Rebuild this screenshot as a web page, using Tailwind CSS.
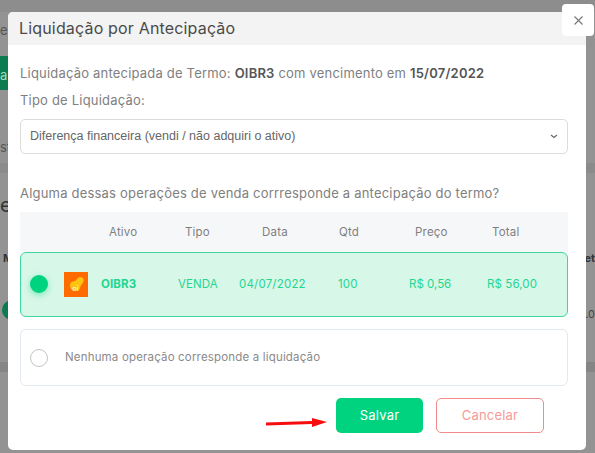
<!DOCTYPE html>
<html lang="pt-BR">
<head>
    <meta charset="UTF-8">
    <title>Liquidação por Antecipação</title>
    <script src="https://cdn.jsdelivr.net/npm/@tailwindcss/browser@4"></script>
</head>
<body class="font-['Inter',sans-serif]">
    <div class="relative w-[595px] h-[453px] overflow-hidden bg-[#939393]">
        <!-- page behind the backdrop -->
        <div class="absolute left-0 top-0 w-full h-[12px] bg-[#8d8d8d]"></div>
        <div class="absolute left-0 top-[56px] w-[8px] h-[34px] bg-[#0c7c50]"></div>
        <div class="absolute left-0 top-[163px] w-[8px] h-[10px] bg-[#8b8b8b]"></div>
        <div class="absolute right-0 top-[163px] w-[9px] h-[10px] bg-[#8b8b8b]"></div>
        <div class="absolute left-0 top-[362px] w-[8px] h-[10px] bg-[#858585]"></div>
        <div class="absolute right-0 top-[362px] w-[9px] h-[10px] bg-[#858585]"></div>
        <div class="absolute left-[2px] top-[300px] w-[20px] h-[20px] rounded-full bg-[#0c7c50]"></div>
        <span class="absolute left-0 top-[21px] text-[13px] text-[#555]">er</span>
        <span class="absolute left-0 top-[66px] text-[13px] text-[#a5d8c0]">a</span>
        <span class="absolute left-0 top-[138px] text-[13px] text-[#555]">st</span>
        <span class="absolute left-0 top-[190px] text-[20px] text-[#333]">e</span>
        <span class="absolute left-[3px] top-[250px] text-[11px] font-bold text-[#333]">M</span>
        <span class="absolute right-0 top-[250px] text-[11px] font-bold text-[#333]">et</span>
        <span class="absolute right-0 top-[306px] text-[11px] text-[#444]">0.0</span>

        <!-- modal -->
        <div class="absolute left-[8px] top-[12px] w-[578px] h-[438px] rounded-[5px] bg-white flex flex-col">
            <div class="h-[33px] shrink-0 rounded-t-[5px] bg-[#f3f3f3] pl-[11px] pb-[1px] flex items-center text-[16px] tracking-[0.17px] text-[#4a4a4a]">Liquidação por Antecipação</div>
            <div class="flex flex-col pl-[12px] pr-[18px] text-[13px] tracking-[0.2px] text-[#808080]">
                <p class="mt-[19px] h-[18px] leading-[18px]">Liquidação antecipada de Termo: <b class="font-semibold text-[#555]">OIBR3</b> com vencimento em <b class="font-semibold text-[#555]">15/07/2022</b></p>
                <p class="mt-[9px] h-[18px] leading-[18px]">Tipo de Liquidação:</p>
                <div class="mt-[10px] h-[35px] rounded-[5px] border border-[#dcdcdc] pl-[9px] pr-[9px] flex items-center justify-between font-['Liberation_Sans',sans-serif] text-[12.5px] tracking-normal text-[#666]">
                    <span>Diferença financeira (vendi / não adquiri o ativo)</span>
                    <svg width="8" height="5" viewBox="0 0 8 5" fill="none" stroke="#666" stroke-width="1.1"><path d="M1 1l3 2.500 3-2.500"/></svg>
                </div>
                <p class="mt-[30px] h-[18px] leading-[18px]">Alguma dessas operações de venda corrresponde a antecipação do termo?</p>

                <div class="mt-[10px] h-[40px] pt-[2px] bg-[#f6f7f9] grid grid-cols-[81px_77px_61px_99px_71px_78px_1fr] items-center text-[11.5px] text-[#808080]">
                    <span></span>
                    <span class="pl-[8px]">Ativo</span>
                    <span class="pl-[7px]">Tipo</span>
                    <span class="pl-[23px]">Data</span>
                    <span class="pl-[1px]">Qtd</span>
                    <span class="pl-[6px]">Preço</span>
                    <span class="pl-[5px]">Total</span>
                </div>

                <div class="h-[65px] rounded-[6px] border border-[#3ed69c] bg-[#d7f7e9] grid grid-cols-[80px_77px_61px_99px_71px_78px_1fr] items-center text-[11.5px] tracking-[0.1px] text-[#1fd690]">
                    <div class="flex items-center">
                        <span class="ml-[9px] mt-[-2px] w-[18px] h-[18px] rounded-full bg-[#00d37f] shadow-[0_2px_6px_rgba(0,211,127,0.45)]"></span>
                        <span class="ml-[16px] w-[24px] h-[25px] bg-[#ff6b00] relative flex items-center justify-center">
                            <svg class="absolute left-[5px] top-[5px]" width="15" height="15" viewBox="0 0 15 15"><path d="M1 8c0-2 1-3 3-3.500 2-.5 3-1 4-2.500 1-1.500 3-2 5-1.500 2 1 2 3 1 5-1 2-2.500 3-3 5.500-.5 2-2 3-4.500 3-3 0-5.500-2-5.500-5.500z" fill="#fdc311"/></svg>
                            <span class="relative mt-[7px] ml-[-1px] text-[7px] leading-none font-semibold text-[#fff3c4]">oi</span>
                        </span>
                    </div>
                    <span class="font-bold">OIBR3</span>
                    <span>VENDA</span>
                    <span class="tracking-[0.2px]">04/07/2022</span>
                    <span>100</span>
                    <span class="tracking-normal">R$ 0,56</span>
                    <span>R$ 56,00</span>
                </div>

                <div class="mt-[12px] h-[57px] rounded-[6px] border border-[#e2e8f0] flex items-center text-[11.5px] tracking-[0.17px] text-[#8a8a8a]">
                    <span class="ml-[9px] w-[18px] h-[18px] rounded-full border border-[#c4c4c4]"></span>
                    <span class="ml-[17px]">Nenhuma operação corresponde a liquidação</span>
                </div>

                <div class="mt-[12px] flex items-start">
                    <svg class="ml-[246px] mt-[18px]" width="62" height="12" viewBox="0 0 62 12"><path d="M0 6.500L46 5V2l15 4-15 5V8L0 9.500z" fill="#f70d0d"/></svg>
                    <button class="ml-[8px] w-[87px] h-[35px] rounded-[5px] bg-[#00d37f] text-[13px] text-white">Salvar</button>
                    <button class="ml-[13px] w-[108px] h-[35px] rounded-[5px] border border-[#f28b8b] text-[13px] text-[#f59a9a]">Cancelar</button>
                </div>
            </div>
        </div>

        <!-- close button -->
        <button class="absolute left-[562px] top-[4px] w-[32px] h-[32px] rounded-[4px] bg-white flex items-center justify-center">
            <svg width="11" height="11" viewBox="0 0 11 11" fill="none" stroke="#777" stroke-width="1.1"><path d="M1.500 1.500l8 8M9.500 1.500l-8 8"/></svg>
        </button>
    </div>
</body>
</html>
